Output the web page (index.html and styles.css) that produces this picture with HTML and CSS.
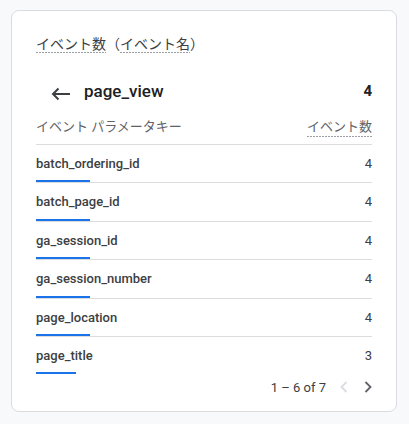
FILE: index.html
```html
<!DOCTYPE html>
<html lang="ja">
<head>
<meta charset="utf-8">
<link rel="stylesheet" href="styles.css">
</head>
<body>
<div class="card">
  <div class="title"><span class="dash">イベント数</span>（<span class="dash">イベント名</span>）</div>
  <div class="head">
    <svg class="back" width="24" height="24" viewBox="0 0 24 24"><path d="M21 12H4M9.5 6.5L4 12l5.5 5.5" fill="none" stroke="#3c4043" stroke-width="2"/></svg>
    <span class="event">page_view</span>
    <span class="total">4</span>
  </div>
  <div class="labels">
    <span>イベント パラメータキー</span>
    <span class="dash">イベント数</span>
  </div>
  <div class="rows">
    <div class="row"><div class="line"><span class="name">batch_ordering_id</span><span class="val">4</span></div><div class="bar" style="width:54px"></div></div>
    <div class="row"><div class="line"><span class="name">batch_page_id</span><span class="val">4</span></div><div class="bar" style="width:54px"></div></div>
    <div class="row"><div class="line"><span class="name">ga_session_id</span><span class="val">4</span></div><div class="bar" style="width:54px"></div></div>
    <div class="row"><div class="line"><span class="name">ga_session_number</span><span class="val">4</span></div><div class="bar" style="width:54px"></div></div>
    <div class="row"><div class="line"><span class="name">page_location</span><span class="val">4</span></div><div class="bar" style="width:54px"></div></div>
    <div class="row"><div class="line"><span class="name">page_title</span><span class="val">3</span></div><div class="bar" style="width:40px"></div></div>
  </div>
  <div class="pager">
    <span class="range">1 – 6 of 7</span>
    <svg class="chev prev" width="12" height="14" viewBox="0 0 12 14"><path d="M8.5 2L3.5 7l5 5" fill="none" stroke="#dadce0" stroke-width="1.8"/></svg>
    <svg class="chev next" width="12" height="14" viewBox="0 0 12 14"><path d="M3.5 2l5 5-5 5" fill="none" stroke="#5f6368" stroke-width="1.8"/></svg>
  </div>
</div>
</body>
</html>
```

FILE: styles.css
```css
* { box-sizing: border-box; }
html, body { margin: 0; padding: 0; }
body {
  background: #f8f9fa;
  font-family: Roboto, "Noto Sans CJK JP", sans-serif;
  color: #3c4043;
  width: 409px;
  height: 424px;
  overflow: hidden;
}
.card {
  margin: 10px 12px 0 11px;
  height: 402px;
  background: #fff;
  border: 1px solid #dadce0;
  border-radius: 8px;
  padding: 23px 24px 0 24px;
}
.title {
  font-size: 14px;
  line-height: 20px;
  color: #3c4043;
}
.dash {
  background-image: linear-gradient(to right, #9aa0a6 60%, transparent 60%);
  background-size: 3px 1px;
  background-repeat: repeat-x;
  background-position: 0 100%;
  padding-bottom: 1px;
}
.head {
  margin-top: 18px;
  height: 40px;
  display: flex;
  align-items: center;
}
.back {
  margin-left: 13px;
  margin-top: 4px;
  flex: none;
}
.event {
  margin-left: 11px;
  font-size: 17px;
  font-weight: 500;
  color: #202124;
  flex: 1;
  margin-top: -2px;
}
.total {
  font-size: 15px;
  font-weight: 700;
  color: #202124;
  margin-top: -2px;
}
.labels {
  height: 33px;
  display: flex;
  justify-content: space-between;
  align-items: center;
  font-size: 13px;
  color: #5f6368;
  border-bottom: 1px solid #dadce0;
  padding-bottom: 2px;
}
.labels span { line-height: 18px; }
.row {
  height: 38.4px;
  padding-top: 11px;
  border-bottom: 1px solid #dadce0;
  display: flex;
  flex-direction: column;
}
.row:last-child { border-bottom: none; height: 37.4px; }
.line {
  display: flex;
  justify-content: space-between;
  line-height: 16px;
  font-size: 13px;
}
.name { font-weight: 500; color: #3c4043; }
.val { color: #3c4043; }
.bar {
  margin-top: auto;
  height: 2px;
  background: #1a73e8;
}
.pager {
  height: 26px;
  display: flex;
  justify-content: flex-end;
  align-items: center;
  font-size: 13px;
  color: #3c4043;
}
.range { margin-right: 0; }
.chev { flex: none; }
.prev { margin-left: 12px; }
.next { margin-left: 12px; margin-right: -2px; }
```
